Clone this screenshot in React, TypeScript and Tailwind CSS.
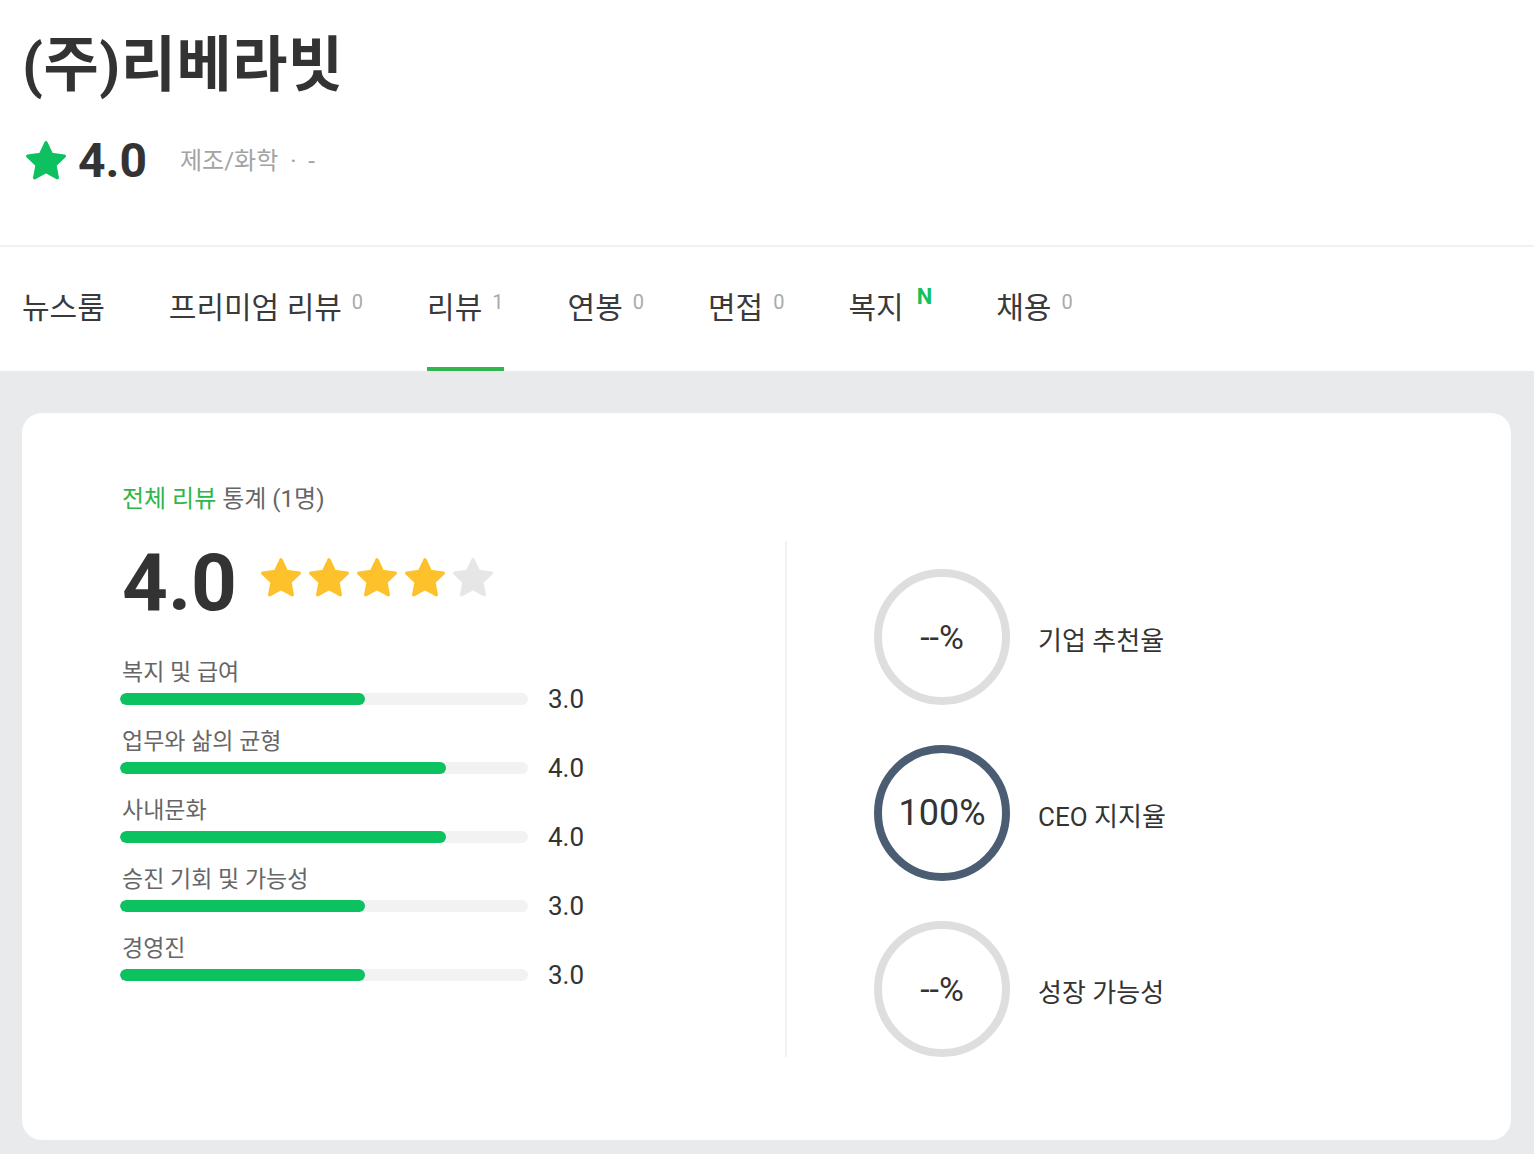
import React from "react";

const FONT = { fontFamily: 'Roboto, "Noto Sans CJK KR", "Noto Sans", sans-serif' };

function Star({ color, size }: { color: string; size: number }) {
  return (
    <svg width={size} height={size} viewBox="0 0 24 24">
      <path
        d="M12 2.8l2.8 5.9 6.4.8-4.7 4.5 1.2 6.4L12 17.3l-5.7 3.1 1.2-6.4-4.7-4.5 6.4-.8z"
        fill={color}
        stroke={color}
        strokeWidth={1.6}
        strokeLinejoin="round"
      />
    </svg>
  );
}

const tabs: { name: string; count?: string; n?: boolean; active?: boolean }[] = [
  { name: "뉴스룸" },
  { name: "프리미엄 리뷰", count: "0" },
  { name: "리뷰", count: "1", active: true },
  { name: "연봉", count: "0" },
  { name: "면접", count: "0" },
  { name: "복지", n: true },
  { name: "채용", count: "0" },
];

const bars = [
  { label: "복지 및 급여", v: 3.0 },
  { label: "업무와 삶의 균형", v: 4.0 },
  { label: "사내문화", v: 4.0 },
  { label: "승진 기회 및 가능성", v: 3.0 },
  { label: "경영진", v: 3.0 },
];

function Ring({ text, active, label }: { text: string; active?: boolean; label: string }) {
  return (
    <div className="flex items-center">
      <div
        className={
          "w-[136px] h-[136px] rounded-full border-[8px] flex items-center justify-center " +
          (active ? "border-[#4a5d72]" : "border-[#dedede]")
        }
      >
        <span className={active ? "text-[36px] text-[#333] leading-none" : "text-[34px] text-[#333] leading-none"}>
          {text}
        </span>
      </div>
      <span className="ml-[28px] mt-[9px] text-[26px] text-[#333]">{label}</span>
    </div>
  );
}

export default function App() {
  return (
    <div style={FONT} className="w-[1534px] min-h-[1154px] bg-[#e9eaec]">
      {/* header */}
      <div className="bg-white px-[22px] pt-[26px] h-[245px]">
        <h1 className="text-[60px] font-bold text-[#333] leading-[80px] tracking-[0.5px]">(주)리베라빗</h1>
        <div className="flex items-center mt-[31px]">
          <Star color="#0dc160" size={48} />
          <span className="ml-[8px] text-[48px] font-bold text-[#333] leading-none">4.0</span>
          <span className="ml-[33px] text-[24px] text-[#a3a3a3] whitespace-pre">제조/화학  ·  -</span>
        </div>
      </div>
      {/* tabs */}
      <div className="bg-white border-t-2 border-[#f1f1f1] h-[126px] px-[22px] flex items-stretch gap-[64px]">
        {tabs.map((t) => (
          <div
            key={t.name}
            className={
              "flex items-center border-b-4 " + (t.active ? "border-[#30b64c]" : "border-transparent")
            }
          >
            <div className="flex items-start pt-[2px]">
              <span className="text-[30px] text-[#3a3a3a] leading-[38px]">{t.name}</span>
              {t.count && <span className="ml-[10px] text-[20px] text-[#aaa] leading-[20px] mt-[3px]">{t.count}</span>}
              {t.n && <span className="ml-[13px] text-[22px] font-bold text-[#13c060] leading-[20px] mt-[-2px]">N</span>}
            </div>
          </div>
        ))}
      </div>
      {/* card */}
      <div className="pt-[42px] px-[22px] pr-[23px] pb-[14px]">
        <div className="bg-white rounded-[20px] h-[727px] pl-[100px] pt-[70px] flex">
          <div className="w-[663px]">
            <div className="text-[24px] leading-[32px] text-[#666]">
              <span className="text-[#30b64c]">전체 리뷰</span> 통계 (1명)
            </div>
            <div className="flex items-center mt-[28px] h-[80px]">
              <span className="text-[80px] font-bold text-[#333] leading-[80px]">4.0</span>
              <div className="flex ml-[20px] mb-[10px]">
                <Star color="#fdc22b" size={48} />
                <Star color="#fdc22b" size={48} />
                <Star color="#fdc22b" size={48} />
                <Star color="#fdc22b" size={48} />
                <Star color="#e6e6e6" size={48} />
              </div>
            </div>
            <div className="mt-[36px] flex flex-col gap-[15px]">
              {bars.map((b) => (
                <div key={b.label}>
                  <div className="text-[23px] leading-[28px] text-[#666]">{b.label}</div>
                  <div className="flex items-center mt-[-2px] h-[28px] -ml-[2px]">
                    <div className="w-[408px] h-[12px] rounded-full bg-[#f2f2f2] overflow-hidden">
                      <div className="h-full rounded-full bg-[#0cc160]" style={{ width: `${(b.v / 5) * 100}%` }} />
                    </div>
                    <span className="ml-[20px] text-[26px] text-[#333] leading-[28px]">{b.v.toFixed(1)}</span>
                  </div>
                </div>
              ))}
            </div>
          </div>
          <div className="mt-[58px] h-[516px] border-l-2 border-[#f2f2f2] pl-[87px] pt-[28px] flex flex-col gap-[40px]">
            <Ring text="--%" label="기업 추천율" />
            <Ring text="100%" active label="CEO 지지율" />
            <Ring text="--%" label="성장 가능성" />
          </div>
        </div>
      </div>
    </div>
  );
}
